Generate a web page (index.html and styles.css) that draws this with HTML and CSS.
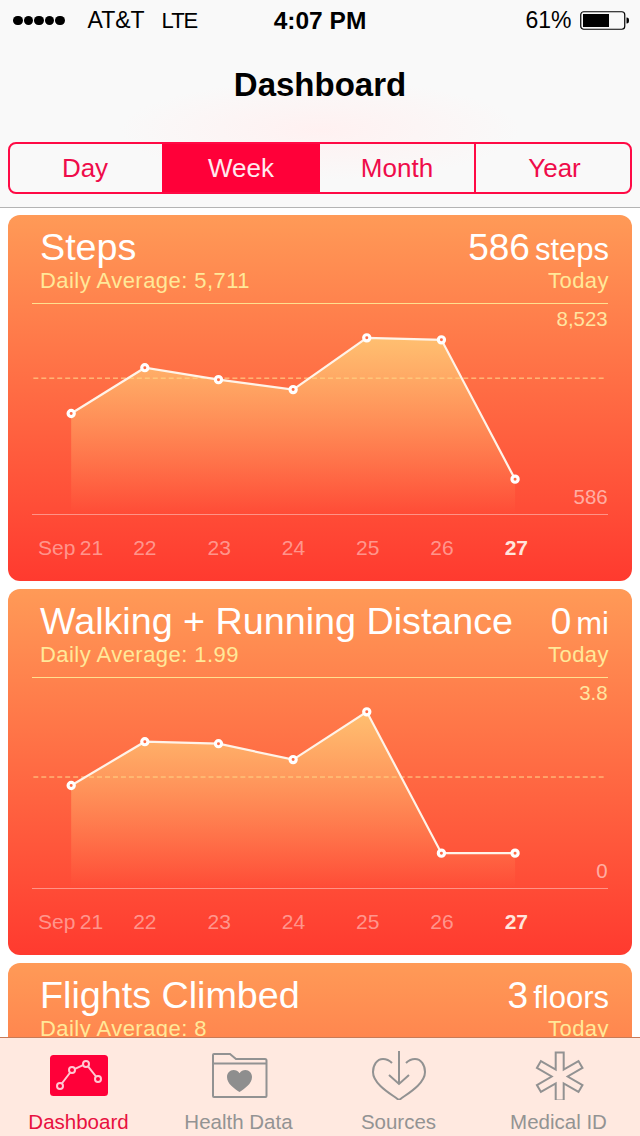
FILE: index.html
```html
<!DOCTYPE html>
<html lang="en">
<head>
<meta charset="utf-8">
<title>Dashboard</title>
<link rel="stylesheet" href="styles.css">
</head>
<body>
<div class="app">
  <header class="top">
    <div class="status">
      <div class="status-left">
        <span class="signal"><i></i><i></i><i></i><i></i><i></i></span>
        <span class="carrier">AT&amp;T</span>
        <span class="net">LTE</span>
      </div>
      <div class="time">4:07 PM</div>
      <div class="status-right">
        <span class="pct">61%</span>
        <svg class="battery" width="50" height="20" viewBox="0 0 50 20"><rect x="0.75" y="0.75" width="44" height="17.5" rx="3" fill="none" stroke="#000" stroke-width="1.2"/><rect x="3" y="3" width="26" height="13" fill="#000"/><path d="M46.5 6.5c2 0 2.500 1 2.500 3s-.5 3-2.500 3z" fill="#000"/></svg>
      </div>
    </div>
    <h1 class="nav-title">Dashboard</h1>
    <div class="segments">
      <div class="seg seg-day">Day</div>
      <div class="seg seg-on">Week</div>
      <div class="seg seg-line">Month</div>
      <div class="seg seg-year">Year</div>
    </div>
  </header>

  <main class="list">
    <section class="card">
      <div class="head">
        <div class="row row-main"><span class="title">Steps</span><span class="value">586<span class="unit">steps</span></span></div>
        <div class="row row-sub"><span>Daily Average: 5,711</span><span>Today</span></div>
      </div>
      <svg class="chart" width="576" height="211" viewBox="32 304 576 211">
        <defs><linearGradient id="fillA" x1="0" y1="0" x2="0" y2="1"><stop offset="0" stop-color="#ffd67d" stop-opacity=".75"/><stop offset="1" stop-color="#ffc878" stop-opacity="0"/></linearGradient></defs>
        <line class="avg" x1="32" y1="378.500" x2="606" y2="378.500"/>
        <polygon fill="url(#fillA)" points="70,414 144,368 218,380 293,390 367,338 442,340 516,480 516,515 70,515"/>
        <polyline class="plot" points="70,414 144,368 218,380 293,390 367,338 442,340 516,480"/>
        <circle class="dot" cx="70" cy="414" r="3.100"/><circle class="dot" cx="144" cy="368" r="3.100"/><circle class="dot" cx="218" cy="380" r="3.100"/><circle class="dot" cx="293" cy="390" r="3.100"/><circle class="dot" cx="367" cy="338" r="3.100"/><circle class="dot" cx="442" cy="340" r="3.100"/><circle class="dot" cx="516" cy="480" r="3.100"/>
        <text class="max" x="609" y="326">8,523</text>
        <text class="min" x="609" y="505">586</text>
      </svg>
      <div class="axis"><span>Sep 21</span><span>22</span><span>23</span><span>24</span><span>25</span><span>26</span><span class="now">27</span></div>
    </section>

    <section class="card">
      <div class="head">
        <div class="row row-main"><span class="title">Walking + Running Distance</span><span class="value">0<span class="unit">mi</span></span></div>
        <div class="row row-sub"><span>Daily Average: 1.99</span><span>Today</span></div>
      </div>
      <svg class="chart" width="576" height="211" viewBox="32 678 576 211">
        <defs><linearGradient id="fillB" x1="0" y1="0" x2="0" y2="1"><stop offset="0" stop-color="#ffd67d" stop-opacity=".75"/><stop offset="1" stop-color="#ffc878" stop-opacity="0"/></linearGradient></defs>
        <line class="avg" x1="32" y1="777.500" x2="606" y2="777.500"/>
        <polygon fill="url(#fillB)" points="70,786 144,742 218,744 293,760 367,712 442,854 516,854 516,889 70,889"/>
        <polyline class="plot" points="70,786 144,742 218,744 293,760 367,712 442,854 516,854"/>
        <circle class="dot" cx="70" cy="786" r="3.100"/><circle class="dot" cx="144" cy="742" r="3.100"/><circle class="dot" cx="218" cy="744" r="3.100"/><circle class="dot" cx="293" cy="760" r="3.100"/><circle class="dot" cx="367" cy="712" r="3.100"/><circle class="dot" cx="442" cy="854" r="3.100"/><circle class="dot" cx="516" cy="854" r="3.100"/>
        <text class="max" x="609" y="700">3.8</text>
        <text class="min" x="609" y="879">0</text>
      </svg>
      <div class="axis"><span>Sep 21</span><span>22</span><span>23</span><span>24</span><span>25</span><span>26</span><span class="now">27</span></div>
    </section>

    <section class="card">
      <div class="head">
        <div class="row row-main"><span class="title">Flights Climbed</span><span class="value">3<span class="unit">floors</span></span></div>
        <div class="row row-sub"><span>Daily Average: 8</span><span>Today</span></div>
      </div>
    </section>
  </main>

  <nav class="tabs">
    <div class="tab tab-on">
      <svg class="tab-icon" width="80" height="50" viewBox="0 0 80 50">
        <rect x="10" y="5" width="58" height="41" rx="3.500" fill="#ff0039"/>
        <g fill="none" stroke="#ffc9d3" stroke-width="2"><path d="M21.800 33.500L30.200 22.500M35 18.800l8-3.600M48 16.400l8 10.100"/><circle cx="20" cy="36" r="3"/><circle cx="32" cy="20" r="3"/><circle cx="46" cy="14" r="3"/><circle cx="58" cy="29" r="3"/></g>
      </svg>
      <span>Dashboard</span>
    </div>
    <div class="tab">
      <svg class="tab-icon" width="80" height="50" viewBox="0 0 80 50">
        <path class="ln" d="M13 5v41a1 1 0 0 0 1 1h51.500a1 1 0 0 0 1-1V10.500a1.500 1.500 0 0 0-1.500-1.500H36L30 4H14a1 1 0 0 0-1 1zM13 13.500h53.500"/>
        <path d="M39.500 42c-5-3.500-12.500-8-12.500-15 0-4 3-7 6.500-7 2.500 0 4.500 1.200 6 3.200 1.500-2 3.500-3.200 6-3.200 3.500 0 6.500 3 6.500 7 0 7-7.500 11.500-12.500 15z" fill="#8e8e8e"/>
      </svg>
      <span>Health Data</span>
    </div>
    <div class="tab">
      <svg class="tab-icon" width="80" height="50" viewBox="0 0 80 50">
        <path class="ln" d="M32 13C29.500 10.500 26 9 23 9 17 9 13 15 13 22c0 12 18 22 24.500 27 1 1 2 1 3 0C47 44 65 34 65 22c0-7-4-13-10-13-3 0-6.500 1.500-9 4"/>
        <path class="ln" d="M39 1v33M29 25l10 9 10-9"/>
      </svg>
      <span>Sources</span>
    </div>
    <div class="tab">
      <svg class="tab-icon" width="80" height="50" viewBox="0 0 80 50">
        <path class="ln" transform="translate(39.700 26.500)" d="M-4-24H4V-6.930L18.780-15.460 22.780-8.540 8 0 22.780 8.540 18.780 15.460 4 6.930V24H-4V6.930L-18.780 15.460-22.780 8.540-8 0-22.780-8.540-18.780-15.460-4-6.930Z"/>
      </svg>
      <span>Medical ID</span>
    </div>
  </nav>
</div>
</body>
</html>
```
FILE: styles.css
```css
* { box-sizing: border-box; }
html, body { margin: 0; padding: 0; }
body { font-family: "Liberation Sans", Arial, sans-serif; background: #fff; color: #000; }
.app { width: 640px; height: 1136px; display: flex; flex-direction: column; overflow: hidden; }

.top {
  height: 208px; flex: none; border-bottom: 1px solid #b4b4b4;
  background: radial-gradient(ellipse 200px 50px at 50% 130px, #fff1f1 0%, #f9f9f9 100%) #f9f9f9;
  padding: 0 8px;
}
.status { height: 41px; display: grid; grid-template-columns: 1fr auto 1fr; align-items: center; font-size: 23px; margin: 0 -8px; }
.status-left { display: flex; align-items: center; padding-left: 13px; }
.signal { display: flex; gap: 1px; margin-right: 23px; }
.signal i { width: 9.500px; height: 9.500px; border-radius: 50%; background: #000; }
.net { margin-left: 17px; font-size: 22px; letter-spacing: -1px; }
.time { font-weight: 700; font-size: 24.500px; }
.status-right { display: flex; justify-content: flex-end; align-items: center; gap: 8.500px; padding-right: 10px; }
.battery { display: block; }

.nav-title { margin: 0; height: 101px; display: flex; align-items: center; justify-content: center; font-size: 33px; font-weight: 700; padding-bottom: 14px; }

.segments { height: 52px; display: grid; grid-template-columns: 152px 158px 156px 1fr; border: 2px solid #ff0a45; border-radius: 8px; overflow: hidden; }
.seg { display: flex; align-items: center; justify-content: center; font-size: 26px; color: #ef0c4a; }
.seg-day { padding-right: 2px; }
.seg-year { padding-left: 3px; }
.seg-on { background: #ff0039; color: #ffe9ee; }
.seg-line { border-right: 2px solid #ff0a45; }

.list { flex: 1; min-height: 0; overflow: hidden; padding: 7px 8px 0; display: flex; flex-direction: column; gap: 8px; }
.card { flex: none; height: 366px; border-radius: 12px; background: linear-gradient(#ff9a57 0%, #ff3a2f 100%); padding: 0 24px; }

.head { height: 89px; border-bottom: 1px solid #ffe08f; padding-left: 8px; }
.row { display: flex; justify-content: space-between; align-items: baseline; margin-right: -1px; }
.row-main { height: 53px; padding-top: 11px; color: #fff; }
.title { font-size: 37.700px; }
.value { font-size: 37px; }
.unit { font-size: 31px; margin-left: 5px; }
.row-sub { font-size: 22px; color: #ffe899; line-height: 26px; letter-spacing: .45px; }

.chart { display: block; border-bottom: 1px solid rgba(255,255,255,.4); }
.avg { stroke: #ffe899; stroke-width: 1; stroke-dasharray: 5 3; opacity: .9; }
.plot { fill: none; stroke: #fff3e8; stroke-width: 2.200; }
.dot { fill: #ff6b45; stroke: #fff; stroke-width: 3.200; }
.max, .min { font-size: 20.500px; text-anchor: end; }
.max { fill: #ffe4a0; }
.min { fill: rgba(255,255,255,.55); }

.axis { display: grid; grid-template-columns: repeat(7, 74.300px); margin-left: 1.400px; font-size: 21px; word-spacing: -1.500px; color: rgba(255,255,255,.45); text-align: center; line-height: 26px; padding-top: 20px; }
.now { font-weight: 700; color: #ffe5dc; }

.tabs {
  height: 99px; flex: none; display: grid; grid-template-columns: repeat(4, 1fr);
  background: #ffe9e0; border-top: 1px solid #c77a57;
}
.tab { display: flex; flex-direction: column; align-items: center; font-size: 20.500px; color: #939393; padding-right: 3px; }
.tab-icon { display: block; margin: 12px -3px 0 0; height: 50px; flex: none; }
.tab span { line-height: 26px; margin-top: 9px; }
.tab-on { color: #e8103f; }
.ln { fill: none; stroke: #929292; stroke-width: 2; }
```
